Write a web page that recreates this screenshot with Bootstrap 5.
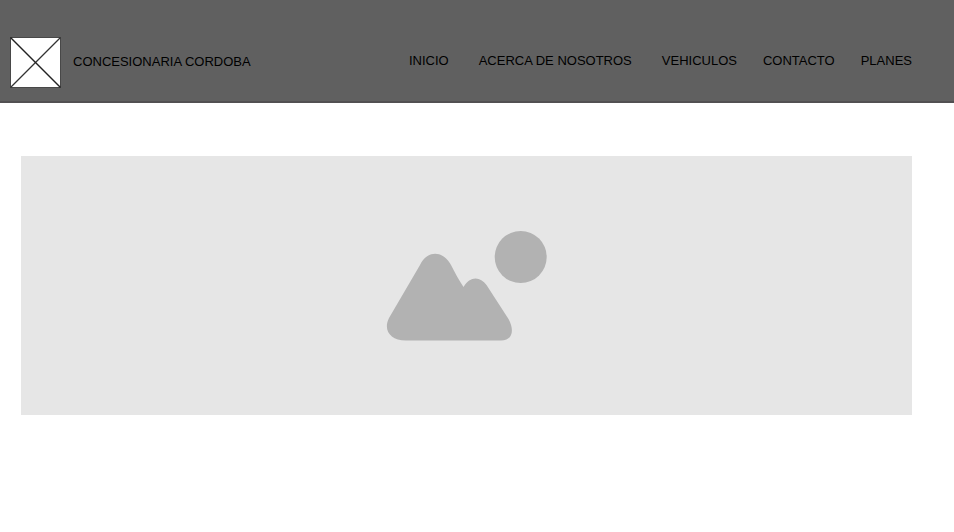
<!DOCTYPE html>
<html lang="es">
<head>
<meta charset="utf-8">
<meta name="viewport" content="width=device-width, initial-scale=1">
<title>Concesionaria Cordoba</title>
<link href="https://cdn.jsdelivr.net/npm/bootstrap@5.3.0/dist/css/bootstrap.min.css" rel="stylesheet">
<style>
  body { font-family: "Liberation Sans", Arial, sans-serif; font-size: 13px; background: #fff; }
  .site-header { background: #606060; border-bottom: 2px solid #525052; padding: 36px 42px 12px 9px; line-height: 20px; }
  .site-header a { color: #000; font-size: 13px; }
  .brand-logo { width: 52px; height: 53px; }
  .brand-name { padding-bottom: 2px; }
  .menu-main { gap: 30px; padding-bottom: 4px; }
  .menu-extra { gap: 26px; }
  .hero { padding: 53px 42px 53px 21px; }
  .hero-image { background: #e6e6e6; padding: 74px 0; }
</style>
</head>
<body>
<header>
  <nav class="navbar navbar-expand site-header" aria-label="Principal">
    <a class="navbar-brand d-flex align-items-center p-0 m-0 gap-2" href="#">
      <svg class="brand-logo" viewBox="0 0 52 53" aria-hidden="true">
        <rect x="1.5" y="1.5" width="50" height="50" fill="#fff" stroke="#484848"/>
        <path d="M1.5 51.5L51.500 1.500" stroke="#333" stroke-width="1.2"/>
        <path d="M1.500 1.500L51.500 51.500" stroke="#222" stroke-width="1.5"/>
      </svg>
      <span class="brand-name ps-1">CONCESIONARIA CORDOBA</span>
    </a>
    <div class="d-flex ms-auto menu-main">
      <a class="nav-link p-0" href="#">INICIO</a>
      <a class="nav-link p-0" href="#">ACERCA DE NOSOTROS</a>
      <div class="d-flex menu-extra">
        <a class="nav-link p-0" href="#">VEHICULOS</a>
        <a class="nav-link p-0" href="#">CONTACTO</a>
        <a class="nav-link p-0" href="#">PLANES</a>
      </div>
    </div>
  </nav>
</header>
<main class="hero">
  <div class="hero-image d-flex justify-content-center">
    <svg width="162" height="111" viewBox="0 0 162 111" role="img" aria-label="Imagen">
      <g fill="#b2b2b2">
        <circle cx="134.700" cy="27" r="26"/>
        <path d="M34 35C41 20 57 20 65 35C69 43 73 50 77.500 57C84 46 94 46 100.500 55L122.500 89C129 101 126 110.500 115 110.500H20C4 110.500-3 100 3 88Z"/>
      </g>
    </svg>
  </div>
</main>
<script src="https://cdn.jsdelivr.net/npm/bootstrap@5.3.0/dist/js/bootstrap.bundle.min.js"></script>
</body>
</html>
